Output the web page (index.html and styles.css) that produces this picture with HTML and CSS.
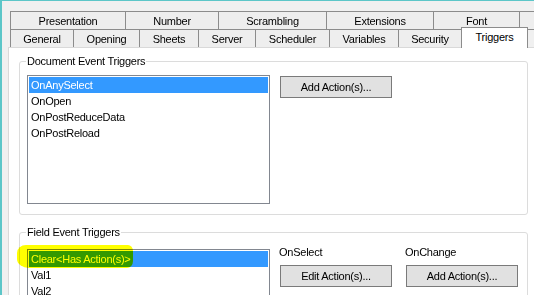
FILE: index.html
```html
<html lang="en">
<head>
<meta charset="UTF-8" />
<meta name="viewport" content="width=device-width, initial-scale=1" />
<title>Document Properties - Triggers</title>
<link rel="stylesheet" href="styles.css">
</head>
<body>
  <main class="dialog">
    <nav class="tabs">
      <div class="tab-row row-top">
        <div class="tab">Presentation</div>
        <div class="tab">Number</div>
        <div class="tab">Scrambling</div>
        <div class="tab">Extensions</div>
        <div class="tab">Font</div>
        <div class="tab"></div>
      </div>
      <div class="tab-row row-bottom">
        <div class="tab">General</div>
        <div class="tab">Opening</div>
        <div class="tab">Sheets</div>
        <div class="tab">Server</div>
        <div class="tab">Scheduler</div>
        <div class="tab">Variables</div>
        <div class="tab">Security</div>
        <div class="tab active">Triggers</div>
      </div>
    </nav>

    <section class="panel">
      <!-- Документ деңгейіндегі триггерлер -->
      <fieldset class="group doc-group">
        <legend>Document Event Triggers</legend>
        <div class="group-body">
          <ul class="listbox doc-list">
            <li class="selected">OnAnySelect</li>
            <li>OnOpen</li>
            <li>OnPostReduceData</li>
            <li>OnPostReload</li>
          </ul>
          <div class="actions">
            <button class="btn">Add Action(s)...</button>
          </div>
        </div>
      </fieldset>

      <!-- Өріс триггерлері -->
      <fieldset class="group field-group">
        <legend>Field Event Triggers</legend>
        <div class="group-body">
          <div class="list-wrap">
            <ul class="listbox field-list">
              <li class="selected">Clear&lt;Has Action(s)&gt;</li>
              <li>Val1</li>
              <li>Val2</li>
            </ul>
            <span class="marker"></span>
          </div>
          <div class="event-col">
            <span class="event-label">OnSelect</span>
            <button class="btn">Edit Action(s)...</button>
          </div>
          <div class="event-col">
            <span class="event-label">OnChange</span>
            <button class="btn">Add Action(s)...</button>
          </div>
        </div>
      </fieldset>
    </section>
  </main>
</body>
</html>
```

FILE: styles.css
```css
:root{
  --frame:#5cc6c8;
  --bg:#f0f0f0;
  --tab-border:#8c8c8c;
  --panel-border:#d9d9d9;
  --group-border:#dcdcdc;
  --list-border:#828790;
  --select:#3399ff;
}
*{box-sizing:border-box}
html,body{height:100%}
body{
  margin:0;
  background:var(--bg);
  border-top:1px solid var(--frame);
  border-left:2px solid var(--frame);
  overflow:hidden;
  font-family:"Liberation Sans", Arial, sans-serif;
  font-size:11px;
  letter-spacing:-0.25px;
  color:#000;
}

.dialog{
  padding:10px 0 0 6px;
  height:100%;
  display:flex;
  flex-direction:column;
}

/* Қойындылар */
.tabs{ margin-left:2px; }
.tab-row{ display:flex; }
.tab{
  flex:0 0 auto;
  height:19px;
  border:1px solid var(--tab-border);
  margin-left:-1px;
  background:#eeeeee;
  display:flex;
  align-items:center;
  justify-content:center;
  white-space:nowrap;
}
.tab:first-child{ margin-left:0 }

.row-top .tab:nth-child(1){ width:116px }
.row-top .tab:nth-child(2){ width:94px }
.row-top .tab:nth-child(3){ width:109px }
.row-top .tab:nth-child(4){ width:108px }
.row-top .tab:nth-child(5){ width:87px }
.row-top .tab:nth-child(6){ width:100px }

.row-bottom{ margin-top:-3px; align-items:flex-end; }
.row-bottom .tab:nth-child(1){ width:64px }
.row-bottom .tab:nth-child(2){ width:67px }
.row-bottom .tab:nth-child(3){ width:60px }
.row-bottom .tab:nth-child(4){ width:58px }
.row-bottom .tab:nth-child(5){ width:75px }
.row-bottom .tab:nth-child(6){ width:70px }
.row-bottom .tab:nth-child(7){ width:64px }
.tab.active{
  width:67px;
  height:21px;
  background:#fff;
  border-bottom:none;
  padding-bottom:2px;
  position:relative;
  z-index:1;
}

/* Негізгі панель */
.panel{
  flex:1;
  margin-top:-1px;
  background:#fff;
  border:1px solid var(--panel-border);
  border-right:none;
  padding:7px 0 0 10px;
}

.group{
  width:509px;
  margin:0;
  border:1px solid var(--group-border);
  border-radius:3px;
  padding:7px 7px 10px;
  min-inline-size:0;
}
.group legend{
  padding:0 1px;
  margin-left:-1px;
  line-height:13px;
}
.field-group{ margin-top:11px; }

.group-body{
  display:flex;
  align-items:flex-start;
}

.listbox{
  list-style:none;
  margin:0;
  padding:1px;
  width:243px;
  border:1px solid var(--list-border);
  background:#fff;
}
.listbox li{
  height:16px;
  line-height:16px;
  padding-left:2px;
  white-space:nowrap;
}
.listbox li.selected{ background:var(--select); color:#fff; }
.doc-list{ height:129px; }
.field-list{ height:80px; }

.actions{ margin:1px 0 0 10px; }

.btn{
  width:112px;
  height:22px;
  padding:0;
  border:1px solid #7a7a7a;
  background:#e1e1e1;
  font:inherit;
  letter-spacing:inherit;
  color:#000;
}

.list-wrap{
  position:relative;
  margin-top:3px;
}
/* Сары маркер белгісі */
.marker{
  position:absolute;
  left:-10px; top:-4px;
  width:116px; height:23px;
  background:#ffff00;
  mix-blend-mode:multiply;
  border-radius:9px 5px 6px 12px / 8px 6px 7px 9px;
  filter:blur(0.7px);
  pointer-events:none;
}

.event-col{
  display:flex;
  flex-direction:column;
  align-items:flex-start;
  margin-left:10px;
}
.event-col + .event-col{ margin-left:14px; }
.event-label{
  line-height:13px;
  margin-left:-1px;
  margin-bottom:6px;
}
```
